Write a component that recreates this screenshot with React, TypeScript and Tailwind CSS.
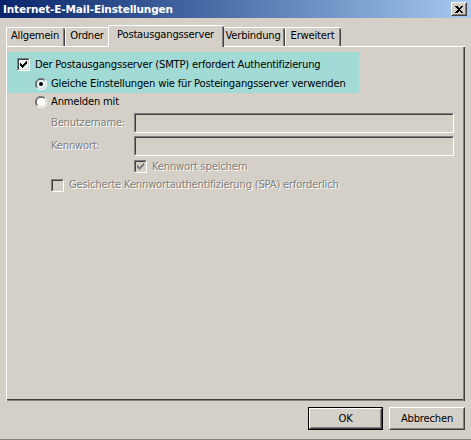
import React from "react";

function CheckMark({ color }: { color: string }) {
  const cols = [2, 3, 4, 3, 2, 1, 0];
  return (
    <svg width="9" height="9" viewBox="0 0 9 9" shapeRendering="crispEdges" className="block">
      {cols.map((r, i) => (
        <rect key={i} x={i + 1} y={r + 1} width="1" height="3" fill={color} />
      ))}
    </svg>
  );
}

function Check({ checked, disabled, tint }: { checked?: boolean; disabled?: boolean; tint?: boolean }) {
  const inner = disabled ? "bg-[#d4d0c8]" : tint ? "bg-[#e6f7f5]" : "bg-white";
  return (
    <span className="block w-[13px] h-[13px] shrink-0 border border-t-[#808080] border-l-[#808080] border-r-white border-b-white">
      <span className={`block w-[11px] h-[11px] border border-t-[#404040] border-l-[#404040] border-r-[#d4d0c8] border-b-[#d4d0c8] ${inner}`}>
        {checked && <CheckMark color={disabled ? "#808080" : "#000000"} />}
      </span>
    </span>
  );
}

function Radio({ checked, tint }: { checked?: boolean; tint?: boolean }) {
  return (
    <svg width="12" height="12" viewBox="0 0 12 12" className="block shrink-0">
      <circle cx="6" cy="6" r="5.5" fill={tint ? "#e6f7f5" : "#ffffff"} />
      <path d="M1.9 10.1 A5.5 5.5 0 0 1 10.1 1.9" stroke="#808080" strokeWidth="1" fill="none" />
      <path d="M10.1 1.9 A5.5 5.5 0 0 1 1.9 10.1" stroke="#ffffff" strokeWidth="1" fill="none" />
      <path d="M2.6 9.4 A4.5 4.5 0 0 1 9.4 2.6" stroke="#404040" strokeWidth="1" fill="none" />
      <path d="M9.4 2.6 A4.5 4.5 0 0 1 2.6 9.4" stroke="#d4d0c8" strokeWidth="1" fill="none" />
      {checked && <circle cx="6" cy="6" r="2" fill="#000000" />}
    </svg>
  );
}

function Tab({ label, w, selected }: { label: string; w: string; selected?: boolean }) {
  if (selected) {
    return (
      <div className={`${w} h-[22px] -mx-[2px] mb-[-1px] relative z-10 bg-[#d4d0c8] border-l border-t border-l-white border-t-white rounded-tl-[2px] flex`}>
        <div className="flex-1 flex items-start justify-center pt-[4px] text-black">{label}</div>
        <div className="w-[2px] h-full border-l border-r border-l-[#808080] border-r-[#404040] rounded-tr-[2px]" />
      </div>
    );
  }
  return (
    <div className={`${w} h-[19px] bg-[#d4d0c8] border-l border-t border-l-white border-t-white rounded-tl-[2px] flex`}>
      <div className="flex-1 flex items-start justify-center pt-[3px] text-black">{label}</div>
      <div className="w-[2px] h-full border-l border-r border-l-[#808080] border-r-[#404040] rounded-tr-[2px]" />
    </div>
  );
}

function Input() {
  return (
    <div className="w-[320px] h-[20px] border border-t-[#808080] border-l-[#808080] border-r-white border-b-white">
      <div className="w-full h-full border border-t-[#404040] border-l-[#404040] border-r-[#d4d0c8] border-b-[#d4d0c8] bg-[#d4d0c8]" />
    </div>
  );
}

function Button({ label, isDefault }: { label: string; isDefault?: boolean }) {
  if (isDefault) {
    return (
      <div className="w-[75px] h-[23px] border border-black">
        <div className="w-full h-full border border-t-white border-l-white border-r-[#404040] border-b-[#404040]">
          <div className="w-full h-full border border-t-[#d4d0c8] border-l-[#d4d0c8] border-r-[#808080] border-b-[#808080] flex items-center justify-center text-black">
            {label}
          </div>
        </div>
      </div>
    );
  }
  return (
    <div className="w-[76px] h-[23px] border border-t-white border-l-white border-r-[#404040] border-b-[#404040]">
      <div className="w-full h-full border border-t-[#d4d0c8] border-l-[#d4d0c8] border-r-[#808080] border-b-[#808080] flex items-center justify-center text-black">
        {label}
      </div>
    </div>
  );
}

export default function App() {
  const dis = "text-[#808080] [text-shadow:1px_1px_0_#ffffff]";
  return (
    <div className="w-[471px] h-[440px] bg-[#d4d0c8] flex flex-col font-['DejaVu_Sans',sans-serif] text-[10px] tracking-[-0.2px] leading-none text-black border-b border-b-[#808080] overflow-hidden">
      {/* Title bar */}
      <div className="h-[18px] shrink-0 flex items-center justify-between pl-[3px] pr-[4px] bg-gradient-to-r from-[#0a246a] to-[#a6caf0]">
        <span className="text-white font-bold text-[10.5px] tracking-[-0.15px]">Internet-E-Mail-Einstellungen</span>
        <div className="w-[16px] h-[14px] border border-t-white border-l-white border-r-[#404040] border-b-[#404040] bg-[#d4d0c8]">
          <div className="w-full h-full border border-t-[#d4d0c8] border-l-[#d4d0c8] border-r-[#808080] border-b-[#808080] flex items-center justify-center">
            <svg width="8" height="7" viewBox="0 0 8 7" shapeRendering="crispEdges">
              <path d="M0 0h2l2 2 2-2h2L5 3.5 8 7H6L4 5 2 7H0l3-3.5z" fill="#000" />
            </svg>
          </div>
        </div>
      </div>

      {/* Tabs */}
      <div className="mx-[6px] mt-[9px] h-[19px] flex items-end shrink-0">
        <Tab label="Allgemein" w="w-[59px]" />
        <Tab label="Ordner" w="w-[45px]" />
        <Tab label="Postausgangsserver" w="w-[116px]" selected />
        <Tab label="Verbindung" w="w-[63px]" />
        <Tab label="Erweitert" w="w-[56px]" />
      </div>

      {/* Panel */}
      <div className="mx-[6px] w-[459px] h-[355px] shrink-0 border-l border-t border-l-white border-t-white flex">
        <div className="flex-1 flex flex-col border-b border-b-[#808080]">
          <div className="flex-1 flex flex-col pt-[5px]">
            {/* Highlight */}
            <div className="w-[352px] bg-[#a2dbd6] pt-[3px]">
              <div className="h-[19px] flex items-center pl-[10px] gap-[5px]">
                <Check checked tint />
                <span>Der Postausgangsserver (SMTP) erfordert Authentifizierung</span>
              </div>
              <div className="h-[19px] flex items-center pl-[28px] gap-[4px]">
                <Radio checked tint />
                <span>Gleiche Einstellungen wie für Posteingangsserver verwenden</span>
              </div>
            </div>
            <div className="h-[17px] flex items-center pl-[28px] gap-[4px]">
              <Radio />
              <span>Anmelden mit</span>
            </div>
            <div className="mt-[3px] h-[20px] flex items-center pl-[44px]">
              <span className={`w-[83px] ${dis}`}>Benutzername:</span>
              <Input />
            </div>
            <div className="mt-[3px] h-[20px] flex items-center pl-[44px]">
              <span className={`w-[83px] ${dis}`}>Kennwort:</span>
              <Input />
            </div>
            <div className="h-[19px] mt-[1px] flex items-center pl-[127px] gap-[5px]">
              <Check checked disabled />
              <span className={dis}>Kennwort speichern</span>
            </div>
            <div className="h-[18px] flex items-center pl-[44px] gap-[5px]">
              <Check disabled />
              <span className={dis}>Gesicherte Kennwortauthentifizierung (SPA) erforderlich</span>
            </div>
          </div>
          <div className="h-px bg-[#404040]" />
        </div>
        <div className="w-[2px] border-l border-r border-l-[#808080] border-r-[#404040]" />
      </div>

      {/* Buttons */}
      <div className="mt-[6px] flex justify-end gap-[6px] pr-[6px] shrink-0">
        <Button label="OK" isDefault />
        <Button label="Abbrechen" />
      </div>
    </div>
  );
}
